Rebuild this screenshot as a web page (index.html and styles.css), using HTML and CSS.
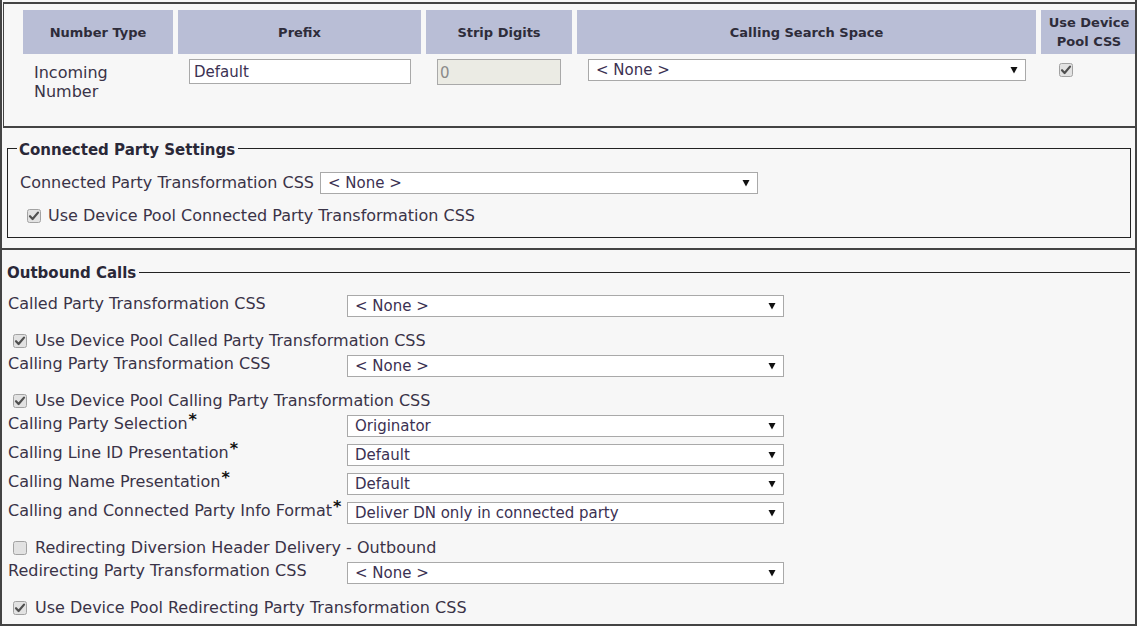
FILE: index.html
```html
<!DOCTYPE html>
<html>
<head>
<meta charset="utf-8">
<title>Number settings</title>
<link rel="stylesheet" href="styles.css">
</head>
<body>
<div class="frame">
  <section class="box box-numbers">
    <table class="num-table">
      <colgroup>
        <col class="c-type"><col class="c-prefix"><col class="c-strip"><col class="c-css"><col class="c-pool">
      </colgroup>
      <thead>
        <tr>
          <th>Number Type</th>
          <th>Prefix</th>
          <th>Strip Digits</th>
          <th>Calling Search Space</th>
          <th class="th-pool">Use Device<br>Pool CSS</th>
        </tr>
      </thead>
      <tbody>
        <tr>
          <td class="cell-type">Incoming<br>Number</td>
          <td class="cell-field"><div class="field input w-prefix">Default</div></td>
          <td class="cell-field"><div class="field input disabled w-strip">0</div></td>
          <td class="cell-field"><div class="field select w-css"><span>&lt; None &gt;</span><svg class="arr" width="8" height="8" viewBox="0 0 8 8"><path d="M0.5 1H7.5L4 7.5Z"/></svg></div></td>
          <td class="cell-pool"><svg class="cb" width="14" height="14" viewBox="0 0 14 14"><rect x="0.5" y="0.5" width="13" height="13" rx="2"/><path class="tick" d="M3 7.2L5.6 10L11 3.6"/></svg></td>
        </tr>
      </tbody>
    </table>
  </section>

  <section class="box box-connected">
    <fieldset class="group group-connected">
      <legend>Connected Party Settings</legend>
      <div class="inline-row">
        <span class="label">Connected Party Transformation CSS</span>
        <div class="field select w-conn"><span>&lt; None &gt;</span><svg class="arr" width="8" height="8" viewBox="0 0 8 8"><path d="M0.5 1H7.5L4 7.5Z"/></svg></div>
      </div>
      <div class="crow crow-conn">
        <svg class="cb" width="14" height="14" viewBox="0 0 14 14"><rect x="0.5" y="0.5" width="13" height="13" rx="2"/><path class="tick" d="M3 7.2L5.6 10L11 3.6"/></svg>
        <span>Use Device Pool Connected Party Transformation CSS</span>
      </div>
    </fieldset>
  </section>

  <section class="box box-outbound">
    <fieldset class="group group-outbound">
      <legend>Outbound Calls</legend>

      <div class="srow">
        <span class="label">Called Party Transformation CSS</span>
        <div class="field select w-out"><span>&lt; None &gt;</span><svg class="arr" width="8" height="8" viewBox="0 0 8 8"><path d="M0.5 1H7.5L4 7.5Z"/></svg></div>
      </div>
      <div class="crow">
        <svg class="cb" width="14" height="14" viewBox="0 0 14 14"><rect x="0.5" y="0.5" width="13" height="13" rx="2"/><path class="tick" d="M3 7.2L5.6 10L11 3.6"/></svg>
        <span>Use Device Pool Called Party Transformation CSS</span>
      </div>

      <div class="srow">
        <span class="label">Calling Party Transformation CSS</span>
        <div class="field select w-out"><span>&lt; None &gt;</span><svg class="arr" width="8" height="8" viewBox="0 0 8 8"><path d="M0.5 1H7.5L4 7.5Z"/></svg></div>
      </div>
      <div class="crow">
        <svg class="cb" width="14" height="14" viewBox="0 0 14 14"><rect x="0.5" y="0.5" width="13" height="13" rx="2"/><path class="tick" d="M3 7.2L5.6 10L11 3.6"/></svg>
        <span>Use Device Pool Calling Party Transformation CSS</span>
      </div>

      <div class="srow">
        <span class="label">Calling Party Selection<span class="req">*</span></span>
        <div class="field select w-out"><span>Originator</span><svg class="arr" width="8" height="8" viewBox="0 0 8 8"><path d="M0.5 1H7.5L4 7.5Z"/></svg></div>
      </div>
      <div class="srow">
        <span class="label">Calling Line ID Presentation<span class="req">*</span></span>
        <div class="field select w-out"><span>Default</span><svg class="arr" width="8" height="8" viewBox="0 0 8 8"><path d="M0.5 1H7.5L4 7.5Z"/></svg></div>
      </div>
      <div class="srow">
        <span class="label">Calling Name Presentation<span class="req">*</span></span>
        <div class="field select w-out"><span>Default</span><svg class="arr" width="8" height="8" viewBox="0 0 8 8"><path d="M0.5 1H7.5L4 7.5Z"/></svg></div>
      </div>
      <div class="srow">
        <span class="label">Calling and Connected Party Info Format<span class="req">*</span></span>
        <div class="field select w-out"><span>Deliver DN only in connected party</span><svg class="arr" width="8" height="8" viewBox="0 0 8 8"><path d="M0.5 1H7.5L4 7.5Z"/></svg></div>
      </div>
      <div class="crow">
        <svg class="cb" width="14" height="14" viewBox="0 0 14 14"><rect x="0.5" y="0.5" width="13" height="13" rx="2"/></svg>
        <span>Redirecting Diversion Header Delivery - Outbound</span>
      </div>
      <div class="srow">
        <span class="label">Redirecting Party Transformation CSS</span>
        <div class="field select w-out"><span>&lt; None &gt;</span><svg class="arr" width="8" height="8" viewBox="0 0 8 8"><path d="M0.5 1H7.5L4 7.5Z"/></svg></div>
      </div>
      <div class="crow">
        <svg class="cb" width="14" height="14" viewBox="0 0 14 14"><rect x="0.5" y="0.5" width="13" height="13" rx="2"/><path class="tick" d="M3 7.2L5.6 10L11 3.6"/></svg>
        <span>Use Device Pool Redirecting Party Transformation CSS</span>
      </div>
    </fieldset>
  </section>
</div>
</body>
</html>
```
FILE: styles.css
```css
* { box-sizing: border-box; }

body {
  margin: 0;
  background: #ffffff;
  font-family: "DejaVu Sans", Verdana, sans-serif;
  font-size: 16px;
  color: #3a3347;
}

.frame {
  width: 1137px;
  background: #f7f7f7;
  border-left: 2px solid #444;
  border-right: 2px solid #444;
  border-bottom: 2px solid #444;
  padding-top: 2px;
}

.box-numbers {
  height: 126px;
  margin-left: 1px;
  border-top: 2px solid #444;
  border-bottom: 2px solid #444;
  border-left: 1px solid #444;
  overflow: hidden;
}

.num-table {
  table-layout: fixed;
  border-collapse: separate;
  border-spacing: 5px;
  margin: 1px 0 0 14px;
  width: 1124px;
}
.c-type { width: 150px; }
.c-prefix { width: 243px; }
.c-strip { width: 146px; }
.c-css { width: 459px; }
.c-pool { width: 96px; }

.num-table th {
  background: #b9bed6;
  height: 44px;
  padding: 0;
  font-size: 13px;
  font-weight: bold;
  line-height: 19px;
  color: #2e2c3a;
  text-align: center;
  vertical-align: middle;
}

.num-table td {
  padding: 0;
  vertical-align: top;
}
.cell-type {
  padding: 4px 0 0 11px !important;
  line-height: 19px;
}
.cell-field { padding-left: 11px !important; }
.cell-pool { padding: 4px 0 0 18px !important; }

.field {
  display: flex;
  align-items: center;
  height: 22px;
  border: 1px solid #a9a9a9;
  background: #ffffff;
  font-size: 15px;
  color: #3b3152;
  line-height: 1;
  padding-left: 7px;
}
.input.w-prefix { width: 222px; height: 25px; padding-left: 4px; padding-top: 2px; }
.input.disabled { width: 124px; height: 26px; padding-left: 2px; padding-top: 2px; background: #ebebe4; color: #8a8a8a; }
.select { justify-content: space-between; padding-right: 7px; }
.w-css { width: 438px; }
.w-conn { width: 438px; }
.w-out { width: 437px; }

.arr { display: block; flex: none; }
.arr path { fill: #111; }

.cb { display: block; flex: none; }
.cb rect { fill: #e2e2e2; stroke: #a2a2a2; }
.cb .tick { fill: none; stroke: #4f4f4f; stroke-width: 2.2; stroke-linecap: round; stroke-linejoin: round; }

.box-connected {
  height: 120px;
  padding-top: 10px;
}

.group {
  margin: 0;
  min-width: 0;
}
.group legend {
  font-size: 15px;
  font-weight: bold;
  line-height: 18px;
  color: #2a2838;
}

.group-connected {
  margin-left: 5px;
  width: 1124px;
  border: 1px solid #222;
  padding: 11px 0 5px 12px;
}
.group-connected legend {
  padding: 3px 3px 0 2px;
  margin-left: -3px;
}

.inline-row {
  display: flex;
  align-items: center;
  gap: 6px;
  height: 26px;
  line-height: 18px;
}

.crow {
  display: flex;
  align-items: center;
  height: 31px;
  padding-top: 10px;
  line-height: 18px;
}
.crow .cb { margin: 0 8px 0 5px; }
.crow-conn { height: 36px; padding-top: 11px; align-items: flex-start; }
.crow-conn .cb { margin: 2px 7px 0 7px; }

.box-outbound {
  border-top: 2px solid #444;
  padding-top: 12px;
}

.group-outbound {
  width: 1128px;
  border: none;
  border-top: 1px solid #222;
  padding: 9px 0 6px 0;
}
.group-outbound legend {
  padding: 2px 3px 0 5px;
}
.group-outbound .srow,
.group-outbound .crow { padding-left: 6px; }
.group-outbound .crow .cb { margin-left: 5px; }

.srow {
  display: flex;
  align-items: flex-start;
  height: 29px;
}
.srow .label {
  width: 339px;
  flex: none;
  padding-top: 4px;
  line-height: 18px;
  white-space: nowrap;
}
.srow .select { margin-top: 4px; }

.req {
  font-weight: bold;
  color: #111;
  font-size: 16px;
  vertical-align: 4px;
  line-height: 0;
  margin-left: 1px;
}
```
